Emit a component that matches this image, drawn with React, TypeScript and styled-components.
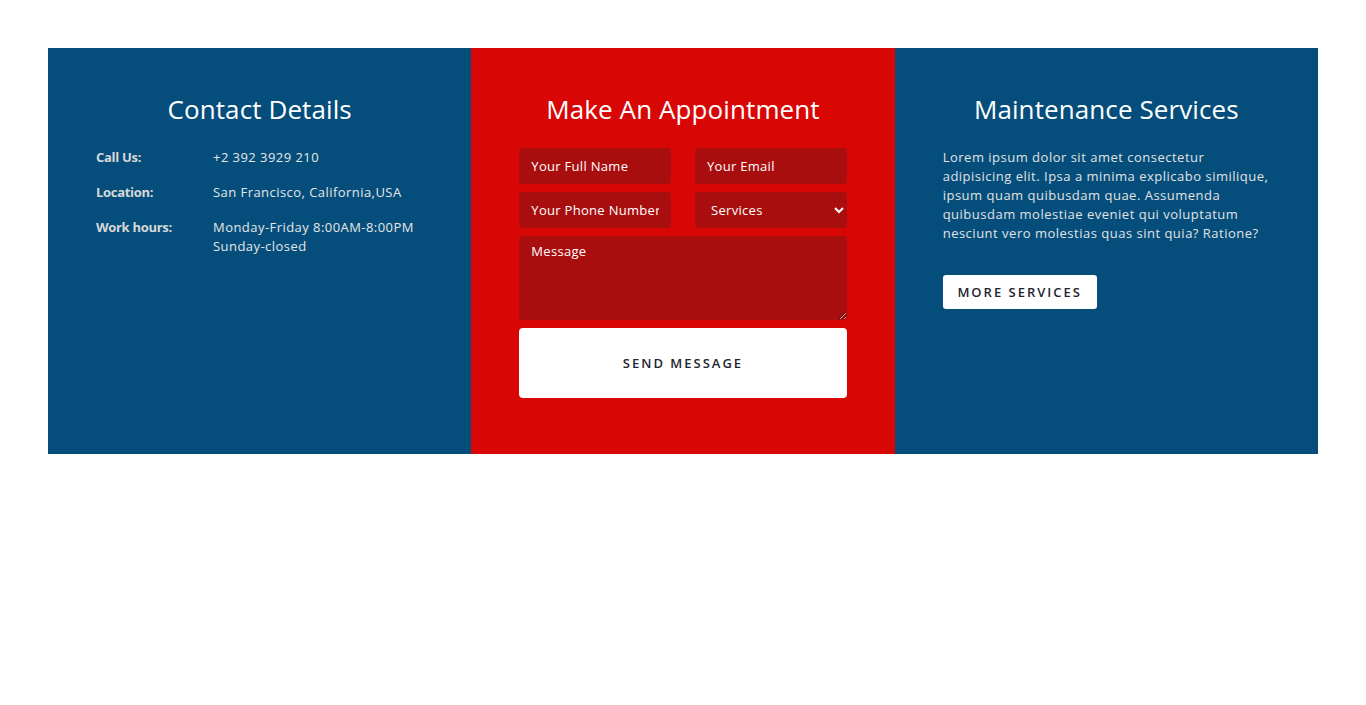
import React from "react";
import styled, { createGlobalStyle } from "styled-components";

const Global = createGlobalStyle`
  html, body { margin: 0; padding: 0; background: #fff; }
  body { font-family: "Open Sans", "Noto Sans", sans-serif; }
  * { box-sizing: border-box; }
`;

const Page = styled.div`
  padding: 48px;
`;

const Section = styled.section`
  display: grid;
  grid-template-columns: repeat(3, 1fr);
  width: 1270px;
`;

const Column = styled.div<{ $tone: "blue" | "red" }>`
  background: ${(p) => (p.$tone === "red" ? "#d90606" : "#054e7c")};
  padding: 48px 48px 56px;
  color: #fff;
`;

const Heading = styled.h3`
  margin: 0 0 25px;
  font-size: 26px;
  line-height: 27px;
  font-weight: 400;
  letter-spacing: 0.1px;
  text-align: center;
  color: #fff;
`;

const InfoList = styled.div`
  display: flex;
  flex-direction: column;
  gap: 16px;
`;

const InfoRow = styled.div`
  display: grid;
  grid-template-columns: 117px 1fr;
  font-size: 13px;
  line-height: 19px;
`;

const Label = styled.span`
  font-weight: 700;
  color: #d8d8d8;
  letter-spacing: -0.3px;
`;

const Value = styled.span`
  color: #e6e6e6;
  letter-spacing: 0.45px;
`;

const Form = styled.form`
  display: grid;
  grid-template-columns: 1fr 1fr;
  column-gap: 24px;
  row-gap: 8px;
`;

const fieldBase = `
  background: #a80e0e;
  border: none;
  border-radius: 4px;
  color: #fff;
  font-family: "Open Sans", "Noto Sans", sans-serif;
  font-size: 13px;
  letter-spacing: 0.3px;
  outline: none;
  width: 100%;
`;

const Input = styled.input`
  ${fieldBase}
  height: 36px;
  padding: 0 12px;
  &::placeholder { color: #fff; opacity: 1; }
`;

const Select = styled.select`
  ${fieldBase}
  height: 36px;
  padding: 0 8px 0 12px;
`;

const TextArea = styled.textarea`
  ${fieldBase}
  grid-column: 1 / -1;
  height: 84px;
  padding: 6px 12px;
  resize: vertical;
  display: block;
  &::placeholder { color: #fff; opacity: 1; }
`;

const SendButton = styled.button`
  grid-column: 1 / -1;
  height: 70px;
  background: #fff;
  border: none;
  border-radius: 4px;
  color: #1f2430;
  font-family: "Open Sans", "Noto Sans", sans-serif;
  font-size: 13px;
  font-weight: 600;
  letter-spacing: 2px;
  text-transform: uppercase;
`;

const Paragraph = styled.p`
  margin: 0 0 32px;
  font-size: 13px;
  line-height: 19px;
  letter-spacing: 0.5px;
  color: #e2e2e2;
`;

const MoreButton = styled.button`
  height: 34px;
  padding: 0 13px;
  background: #fff;
  border: none;
  border-radius: 3px;
  color: #1f2430;
  font-family: "Open Sans", "Noto Sans", sans-serif;
  font-size: 13px;
  font-weight: 600;
  letter-spacing: 2px;
  text-transform: uppercase;
  width: 154px;
`;

export default function App() {
  return (
    <Page>
      <Global />
      <Section>
        <Column $tone="blue">
          <Heading>Contact Details</Heading>
          <InfoList>
            <InfoRow>
              <Label>Call Us:</Label>
              <Value>+2 392 3929 210</Value>
            </InfoRow>
            <InfoRow>
              <Label>Location:</Label>
              <Value>San Francisco, California,USA</Value>
            </InfoRow>
            <InfoRow>
              <Label>Work hours:</Label>
              <Value>
                Monday-Friday 8:00AM-8:00PM
                <br />
                Sunday-closed
              </Value>
            </InfoRow>
          </InfoList>
        </Column>
        <Column $tone="red">
          <Heading>Make An Appointment</Heading>
          <Form onSubmit={(e) => e.preventDefault()}>
            <Input placeholder="Your Full Name" />
            <Input placeholder="Your Email" />
            <Input placeholder="Your Phone Number" />
            <Select defaultValue="services">
              <option value="services">Services</option>
            </Select>
            <TextArea placeholder="Message" />
            <SendButton type="submit">Send Message</SendButton>
          </Form>
        </Column>
        <Column $tone="blue">
          <Heading>Maintenance Services</Heading>
          <Paragraph>
            Lorem ipsum dolor sit amet consectetur adipisicing elit. Ipsa a minima explicabo similique,
            ipsum quam quibusdam quae. Assumenda quibusdam molestiae eveniet qui voluptatum nesciunt
            vero molestias quas sint quia? Ratione?
          </Paragraph>
          <MoreButton>More Services</MoreButton>
        </Column>
      </Section>
    </Page>
  );
}
